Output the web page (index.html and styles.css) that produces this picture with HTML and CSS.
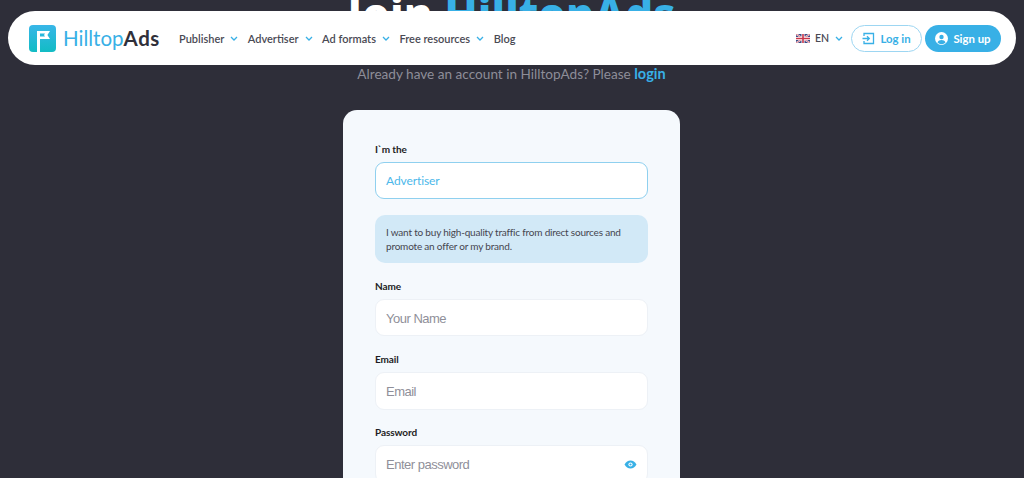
FILE: index.html
```html
<!DOCTYPE html>
<html lang="en">
  <head>
    <meta charset="UTF-8" />
    <meta name="viewport" content="width=device-width, initial-scale=1.0" />
    <title>Join HilltopAds</title>
    <link rel="stylesheet" href="styles.css">
  </head>
  <body>
    <header class="site-header">
      <a class="logo" href="#">
        <svg class="logo-mark" width="27" height="27" viewBox="0 0 27 27">
          <defs>
            <linearGradient id="logo-grad" x1="0" y1="0" x2="0" y2="1">
              <stop offset="0" stop-color="#38b6e8" />
              <stop offset="1" stop-color="#12bcc4" />
            </linearGradient>
          </defs>
          <rect width="27" height="27" rx="4" fill="url(#logo-grad)" />
          <path d="M8 27V6h13l-2.600 4 2.600 4H11v13z" fill="#fff" />
          <path d="M11 8.500h5l-1 1.500 1 1.500h-5z" fill="#27b8dc" />
        </svg>
        <span class="logo-text"><span class="logo-blue">Hilltop</span><span class="logo-dark">Ads</span></span>
      </a>
      <nav class="main-nav">
        <a href="#">Publisher<svg class="chev" width="8" height="5" viewBox="0 0 8 5"><path d="M1 1l3 3 3-3" /></svg></a>
        <a href="#">Advertiser<svg class="chev" width="8" height="5" viewBox="0 0 8 5"><path d="M1 1l3 3 3-3" /></svg></a>
        <a href="#">Ad formats<svg class="chev" width="8" height="5" viewBox="0 0 8 5"><path d="M1 1l3 3 3-3" /></svg></a>
        <a href="#">Free resources<svg class="chev" width="8" height="5" viewBox="0 0 8 5"><path d="M1 1l3 3 3-3" /></svg></a>
        <a href="#">Blog</a>
      </nav>
      <div class="header-right">
        <div class="lang">
          <svg width="14" height="9" viewBox="0 0 14 9">
            <rect width="14" height="9" fill="#3a4a86" />
            <path d="M0 0l14 9M14 0L0 9" stroke="#fff" stroke-width="1.800" />
            <path d="M0 0l14 9M14 0L0 9" stroke="#c8364a" stroke-width="0.700" />
            <path d="M7 0v9M0 4.500h14" stroke="#fff" stroke-width="3" />
            <path d="M7 0v9M0 4.500h14" stroke="#c8364a" stroke-width="1.600" />
          </svg>
          <span>EN</span>
          <svg class="chev" width="8" height="5" viewBox="0 0 8 5"><path d="M1 1l3 3 3-3" /></svg>
        </div>
        <a class="btn btn-outline" href="#">
          <svg width="13" height="13" viewBox="0 0 13 13" fill="none" stroke="#38b0e6" stroke-width="1.300">
            <path d="M2 4V1.500h9.500v10H2V9" />
            <path d="M0.500 6.500h6.500M5 4.300l2.300 2.200L5 8.700" />
          </svg>
          Log in
        </a>
        <a class="btn btn-solid" href="#">
          <svg width="13" height="13" viewBox="0 0 13 13">
            <circle cx="6.500" cy="6.500" r="6.500" fill="#fff" />
            <circle cx="6.500" cy="5" r="2.200" fill="#38b0e6" />
            <path d="M2.500 10.500c.8-1.700 2.200-2.400 4-2.400s3.200.7 4 2.400a5.300 5.300 0 0 1-8 0z" fill="#38b0e6" />
          </svg>
          Sign up
        </a>
      </div>
    </header>

    <main class="page">
      <h1 class="page-title">Join <span class="logo-blue">HilltopAds</span></h1>
      <p class="page-sub">Already have an account in HilltopAds? Please <a href="#">login</a></p>

      <form class="card">
        <div class="field">
          <label>I`m the</label>
          <div class="input input-active">Advertiser</div>
        </div>
        <div class="note">I want to buy high-quality traffic from direct sources and promote an offer or my brand.</div>
        <div class="field">
          <label for="name">Name</label>
          <input class="input" id="name" type="text" placeholder="Your Name" />
        </div>
        <div class="field">
          <label for="email">Email</label>
          <input class="input" id="email" type="text" placeholder="Email" />
        </div>
        <div class="field">
          <label for="password">Password</label>
          <div class="password-wrap">
            <input class="input" id="password" type="text" placeholder="Enter password" />
            <svg class="eye" width="13" height="9" viewBox="0 0 13 9">
              <path d="M0.500 4.500C2 1.800 4 .5 6.500 .5s4.500 1.300 6 4c-1.500 2.700-3.500 4-6 4s-4.500-1.300-6-4z" fill="#38b0e6" />
              <circle cx="6.500" cy="4.500" r="2.100" fill="#fff" />
              <circle cx="6.500" cy="4.500" r="1.100" fill="#38b0e6" />
            </svg>
          </div>
        </div>
      </form>
    </main>
  </body>
</html>
```

FILE: styles.css
```css
* {
  box-sizing: border-box;
}
html,
body {
  height: 478px;
}
body {
  margin: 0;
  overflow: hidden;
  position: relative;
  background: #2e2e39;
  font-family: "Lato", "Noto Sans", sans-serif;
}
a {
  text-decoration: none;
  color: inherit;
}
.logo-blue {
  color: #38b0e6;
}

/* header floats over the page */
.site-header {
  position: absolute;
  top: 11px;
  left: 8px;
  right: 8px;
  height: 54px;
  padding: 0 15px 0 21px;
  display: flex;
  align-items: center;
  background: #fff;
  border-radius: 27px;
}
.logo {
  display: flex;
  align-items: center;
  gap: 7px;
}
.logo-text {
  font-size: 20.500px;
}
.logo-dark {
  color: #30303a;
  font-weight: 700;
  letter-spacing: 0.600px;
}
.main-nav {
  display: flex;
  align-items: center;
  gap: 9.500px;
  margin-left: 19px;
  font-size: 11px;
  font-weight: 600;
  color: #4a4a54;
}
.chev {
  fill: none;
  stroke: #38b0e6;
  stroke-width: 1.300;
  margin-left: 6px;
  vertical-align: 2px;
}
.header-right {
  margin-left: auto;
  display: flex;
  align-items: center;
  gap: 3px;
}
.lang {
  display: flex;
  align-items: center;
  gap: 5px;
  margin-right: 5px;
  font-size: 10.500px;
  font-weight: 600;
  color: #4a4a54;
}
.lang .chev {
  margin-left: 1px;
  vertical-align: baseline;
}
.btn {
  display: flex;
  align-items: center;
  justify-content: center;
  gap: 5px;
  height: 27px;
  border-radius: 14px;
  font-size: 11.400px;
  font-weight: 700;
}
.btn-outline {
  width: 71px;
  border: 1px solid #9dd6f2;
  color: #38b0e6;
}
.btn-solid {
  width: 76px;
  background: #38b0e6;
  color: #fff;
}

.page {
  display: flex;
  flex-direction: column;
  align-items: center;
  margin-top: -19px;
  padding-right: 1px;
}
.page-title {
  margin: 0;
  font-family: "Noto Sans", sans-serif;
  font-size: 44px;
  line-height: 64px;
  font-weight: 800;
  color: #fff;
  white-space: nowrap;
}
.page-sub {
  margin: 19px 0 0;
  font-size: 13.600px;
  line-height: 20px;
  color: #8d8d98;
}
.page-sub a {
  color: #38b0e6;
  font-size: 14.500px;
  font-weight: 700;
}
.card {
  width: 337px;
  margin-top: 26px;
  padding: 31.500px 32px 40px;
  background: #f5f9fd;
  border-radius: 14px;
}
.field {
  margin-bottom: 15.700px;
}
.field label {
  display: block;
  margin-bottom: 5px;
  font-size: 10px;
  line-height: 15px;
  font-weight: 700;
  letter-spacing: -0.100px;
  color: #1d1d24;
}
.input {
  display: block;
  width: 100%;
  height: 37.600px;
  padding: 1px 10px 0;
  background: #fff;
  border: 1px solid #edf1f6;
  border-radius: 9px;
  outline: none;
  font-family: "Liberation Sans", Arial, sans-serif;
  font-size: 13px;
  letter-spacing: -0.500px;
}
.input::placeholder {
  color: #8f8f99;
}
.input-active {
  display: flex;
  align-items: center;
  border-color: #8fd0ef;
  font-family: "Lato", sans-serif;
  font-size: 12px;
  letter-spacing: -0.100px;
  color: #4cb8ea;
}
.note {
  margin: 2.200px 0 16px;
  padding: 10px 10px 10px 11px;
  background: #d2e9f7;
  border-radius: 10px;
  font-size: 10px;
  line-height: 14px;
  letter-spacing: -0.200px;
  color: #45454f;
}
.password-wrap {
  position: relative;
}
.eye {
  position: absolute;
  top: 15px;
  right: 11px;
}
```
